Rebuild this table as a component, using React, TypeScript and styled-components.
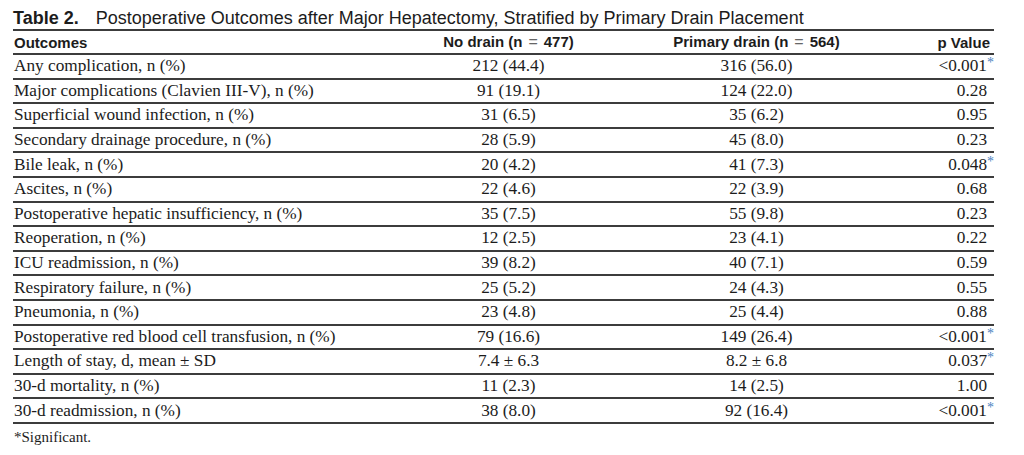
import React from "react";
import styled, { createGlobalStyle } from "styled-components";

const GlobalStyle = createGlobalStyle`
  html, body {
    margin: 0;
    padding: 0;
    background: #ffffff;
  }
`;

const Page = styled.div`
  width: 1024px;
  height: 455px;
  padding: 7px 30px 0 13px;
  box-sizing: border-box;
  color: #1c1c1c;
`;

const Title = styled.div`
  font-family: "Liberation Sans", Arial, sans-serif;
  font-size: 18px;
  line-height: 22px;
  height: 22px;
  border-bottom: 2px solid #3c3c3c;
  white-space: nowrap;
`;

const TitleLabel = styled.span`
  font-weight: bold;
  margin-right: 17px;
`;

const Table = styled.table`
  width: 981px;
  border-collapse: collapse;
  table-layout: fixed;
`;

const Head = styled.th<{ align: string; w: number }>`
  box-sizing: border-box;
  width: ${({ w }) => w}px;
  text-align: ${({ align }) => align};
  font-family: "Liberation Sans", Arial, sans-serif;
  font-weight: bold;
  font-size: 15px;
  height: 23px;
  padding: 0 ${({ align }) => (align === "right" ? "4px" : "0")} 0 1px;
  border-bottom: 2px solid #3c3c3c;
  white-space: nowrap;
`;

const Eq = styled.span`
  font-weight: normal;
  color: #666;
  margin: 0 6px;
  font-size: 16px;
`;

const Row = styled.tr`
  border-bottom: 2px solid #3c3c3c;
`;

const Cell = styled.td<{ align: string }>`
  box-sizing: border-box;
  text-align: ${({ align }) => align};
  font-family: "Liberation Serif", "Times New Roman", serif;
  font-size: 17.25px;
  height: 24.6px;
  padding: 0 ${({ align }) => (align === "right" ? "7px" : "0")} 0 1px;
  white-space: nowrap;
  line-height: 20px;
`;

const PValue = styled.span`
  position: relative;
`;

const Star = styled.span`
  position: absolute;
  left: 100%;
  top: -3px;
  color: #4a82c0;
  font-size: 14px;
`;

const Note = styled.div`
  font-family: "Liberation Serif", "Times New Roman", serif;
  font-size: 15px;
  margin-top: 5px;
  padding-left: 1px;
`;

const rows = [
  ["Any complication, n (%)", "212 (44.4)", "316 (56.0)", "<0.001", true],
  ["Major complications (Clavien III-V), n (%)", "91 (19.1)", "124 (22.0)", "0.28", false],
  ["Superficial wound infection, n (%)", "31 (6.5)", "35 (6.2)", "0.95", false],
  ["Secondary drainage procedure, n (%)", "28 (5.9)", "45 (8.0)", "0.23", false],
  ["Bile leak, n (%)", "20 (4.2)", "41 (7.3)", "0.048", true],
  ["Ascites, n (%)", "22 (4.6)", "22 (3.9)", "0.68", false],
  ["Postoperative hepatic insufficiency, n (%)", "35 (7.5)", "55 (9.8)", "0.23", false],
  ["Reoperation, n (%)", "12 (2.5)", "23 (4.1)", "0.22", false],
  ["ICU readmission, n (%)", "39 (8.2)", "40 (7.1)", "0.59", false],
  ["Respiratory failure, n (%)", "25 (5.2)", "24 (4.3)", "0.55", false],
  ["Pneumonia, n (%)", "23 (4.8)", "25 (4.4)", "0.88", false],
  ["Postoperative red blood cell transfusion, n (%)", "79 (16.6)", "149 (26.4)", "<0.001", true],
  ["Length of stay, d, mean \u00b1 SD", "7.4 \u00b1 6.3", "8.2 \u00b1 6.8", "0.037", true],
  ["30-d mortality, n (%)", "11 (2.3)", "14 (2.5)", "1.00", false],
  ["30-d readmission, n (%)", "38 (8.0)", "92 (16.4)", "<0.001", true],
] as const;

export default function App() {
  return (
    <Page>
      <GlobalStyle />
      <Title>
        <TitleLabel>Table 2.</TitleLabel>
        Postoperative Outcomes after Major Hepatectomy, Stratified by Primary Drain Placement
      </Title>
      <Table>
        <thead>
          <tr>
            <Head align="left" w={395}>Outcomes</Head>
            <Head align="center" w={200}>
              No drain (n<Eq>=</Eq>477)
            </Head>
            <Head align="center" w={296}>
              Primary drain (n<Eq>=</Eq>564)
            </Head>
            <Head align="right" w={90}>p Value</Head>
          </tr>
        </thead>
        <tbody>
          {rows.map(([label, a, b, p, sig]) => (
            <Row key={label}>
              <Cell align="left">{label}</Cell>
              <Cell align="center">{a}</Cell>
              <Cell align="center">{b}</Cell>
              <Cell align="right">
                <PValue>
                  {p}
                  {sig && <Star>*</Star>}
                </PValue>
              </Cell>
            </Row>
          ))}
        </tbody>
      </Table>
      <Note>*Significant.</Note>
    </Page>
  );
}
